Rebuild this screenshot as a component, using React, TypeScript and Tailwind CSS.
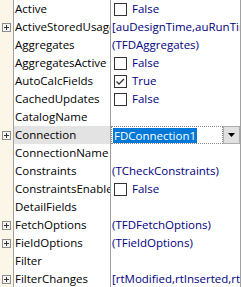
import React from 'react';

type Row = {
  name: string;
  value?: string;
  kind?: 'check' | 'text' | 'edit';
  checked?: boolean;
  plus?: boolean;
};

const rows: Row[] = [
  { name: 'Active', kind: 'check', value: 'False' },
  { name: 'ActiveStoredUsage', value: '[auDesignTime,auRunTime]', plus: true },
  { name: 'Aggregates', value: '(TFDAggregates)' },
  { name: 'AggregatesActive', kind: 'check', value: 'False' },
  { name: 'AutoCalcFields', kind: 'check', checked: true, value: 'True' },
  { name: 'CachedUpdates', kind: 'check', value: 'False' },
  { name: 'CatalogName' },
  { name: 'Connection', kind: 'edit', value: 'FDConnection1', plus: true },
  { name: 'ConnectionName' },
  { name: 'Constraints', value: '(TCheckConstraints)' },
  { name: 'ConstraintsEnabled', kind: 'check', value: 'False' },
  { name: 'DetailFields' },
  { name: 'FetchOptions', value: '(TFDFetchOptions)', plus: true },
  { name: 'FieldOptions', value: '(TFieldOptions)', plus: true },
  { name: 'Filter' },
  { name: 'FilterChanges', value: '[rtModified,rtInserted,rtUnmodified]', plus: true },
];

function PlusBox() {
  return (
    <svg width="9" height="9" viewBox="0 0 9 9" className="block">
      <rect x="0.5" y="0.5" width="8" height="8" fill="#f4f4f4" stroke="#8c8c8c" />
      <path d="M2 4.5h5M4.5 2v5" stroke="#333" strokeWidth="1" />
    </svg>
  );
}

function Check({ checked }: { checked?: boolean }) {
  return (
    <svg width="13" height="13" viewBox="0 0 13 13" className="block shrink-0">
      <rect x="0.5" y="0.5" width="12" height="12" fill="#fff" stroke="#333" />
      {checked && <path d="M2.5 6.5l2.5 2.5 5-5" fill="none" stroke="#333" strokeWidth="1.3" />}
    </svg>
  );
}

export default function App() {
  return (
    <div
      className="w-[244px] h-[287px] overflow-hidden bg-white text-[11.5px] leading-[18px]"
      style={{ fontFamily: '"Open Sans", "Noto Sans", sans-serif' }}
    >
      <div className="flex h-full">
        <div className="w-[241px] flex flex-col border-r border-[#a0a0a0]">
          {rows.map((r) => (
            <div key={r.name} className="flex h-[18px] shrink-0">
              <div className="w-[14px] shrink-0 bg-[#fbf6e8] border-r border-[#a0a0a0] flex items-center justify-center">
                {r.plus && <PlusBox />}
              </div>
              <div
                className={
                  'w-[97px] shrink-0 border-r border-[#a0a0a0] pl-[1px] overflow-hidden whitespace-nowrap text-black ' +
                  (r.kind === 'edit' ? 'bg-[#e3e3e3]' : '')
                }
              >
                {r.name}
              </div>
              {r.kind === 'edit' ? (
                <div className="flex-1 flex min-w-0">
                  <div className="flex-1 border border-dotted border-[#888] flex items-center pl-[1px]">
                    <span className="bg-[#0078d7] text-white leading-[15px] px-[1px]">{r.value}</span>
                  </div>
                  <div className="w-[17px] bg-[#e1e1e1] border border-[#adadad] flex items-center justify-center">
                    <svg width="7" height="4" viewBox="0 0 7 4">
                      <path d="M0 0h7L3.5 4z" fill="#000" />
                    </svg>
                  </div>
                </div>
              ) : r.kind === 'check' ? (
                <div className="flex-1 flex items-center gap-[5px] pl-[3px] text-[#000080] min-w-0">
                  <Check checked={r.checked} />
                  <span>{r.value}</span>
                </div>
              ) : (
                <div className="flex-1 pl-[1px] text-[#000080] overflow-hidden whitespace-nowrap min-w-0">
                  {r.value}
                </div>
              )}
            </div>
          ))}
        </div>
      </div>
    </div>
  );
}
